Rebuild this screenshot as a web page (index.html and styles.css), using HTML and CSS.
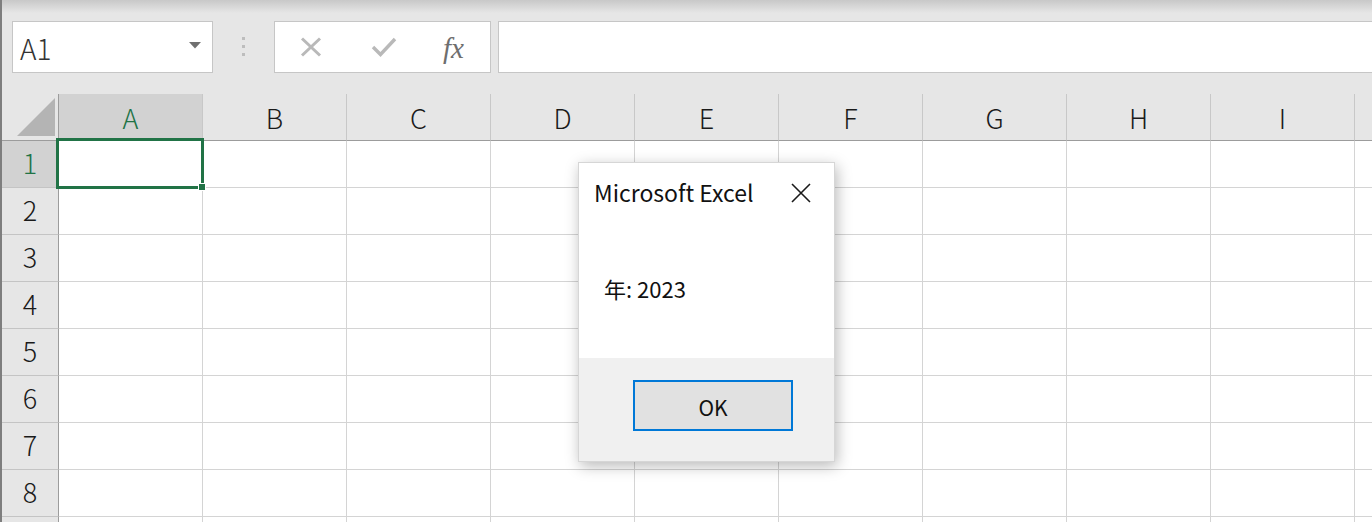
FILE: index.html
```html
<!DOCTYPE html>
<html lang="ja">
<head>
    <meta charset="UTF-8">
    <meta name="viewport" content="width=device-width, initial-scale=1.0">
    <title>Excel</title>
    <link rel="stylesheet" href="styles.css">
</head>
<body>
<div class="app">
    <!-- name box + formula bar -->
    <div class="toolbar">
        <div class="namebox">
            <span>A1</span>
            <svg class="caret" width="12" height="7" viewBox="0 0 12 7"><path d="M0 0H12L6 6.5Z" fill="#707070"/></svg>
        </div>
        <div class="grip"><i></i><i></i><i></i></div>
        <div class="fxbtns">
            <svg width="22" height="20" viewBox="0 0 22 20"><path d="M2 1.5L20 18.5M20 1.5L2 18.5" stroke="#b9b9b9" stroke-width="3" fill="none"/></svg>
            <svg width="26" height="20" viewBox="0 0 26 20"><path d="M2 10L9.5 17.5L24 2" stroke="#b9b9b9" stroke-width="3.4" fill="none"/></svg>
            <span class="fx">fx</span>
        </div>
        <div class="formula"></div>
    </div>

    <!-- sheet grid -->
    <div class="sheet">
        <div class="corner"><svg width="40" height="40" viewBox="0 0 40 40"><path d="M39 1V39H1Z" fill="#b4b4b4"/></svg></div>
        <div class="colhead sel">A</div>
        <div class="colhead">B</div>
        <div class="colhead">C</div>
        <div class="colhead">D</div>
        <div class="colhead">E</div>
        <div class="colhead">F</div>
        <div class="colhead">G</div>
        <div class="colhead">H</div>
        <div class="colhead">I</div>
        <div class="colhead"></div>

        <div class="rowhead sel">1</div>
        <div class="cell active"></div><div class="cell"></div><div class="cell"></div><div class="cell"></div><div class="cell"></div><div class="cell"></div><div class="cell"></div><div class="cell"></div><div class="cell"></div><div class="cell"></div>
        <div class="rowhead">2</div>
        <div class="cell"></div><div class="cell"></div><div class="cell"></div><div class="cell"></div><div class="cell"></div><div class="cell"></div><div class="cell"></div><div class="cell"></div><div class="cell"></div><div class="cell"></div>
        <div class="rowhead">3</div>
        <div class="cell"></div><div class="cell"></div><div class="cell"></div><div class="cell"></div><div class="cell"></div><div class="cell"></div><div class="cell"></div><div class="cell"></div><div class="cell"></div><div class="cell"></div>
        <div class="rowhead">4</div>
        <div class="cell"></div><div class="cell"></div><div class="cell"></div><div class="cell"></div><div class="cell"></div><div class="cell"></div><div class="cell"></div><div class="cell"></div><div class="cell"></div><div class="cell"></div>
        <div class="rowhead">5</div>
        <div class="cell"></div><div class="cell"></div><div class="cell"></div><div class="cell"></div><div class="cell"></div><div class="cell"></div><div class="cell"></div><div class="cell"></div><div class="cell"></div><div class="cell"></div>
        <div class="rowhead">6</div>
        <div class="cell"></div><div class="cell"></div><div class="cell"></div><div class="cell"></div><div class="cell"></div><div class="cell"></div><div class="cell"></div><div class="cell"></div><div class="cell"></div><div class="cell"></div>
        <div class="rowhead">7</div>
        <div class="cell"></div><div class="cell"></div><div class="cell"></div><div class="cell"></div><div class="cell"></div><div class="cell"></div><div class="cell"></div><div class="cell"></div><div class="cell"></div><div class="cell"></div>
        <div class="rowhead">8</div>
        <div class="cell"></div><div class="cell"></div><div class="cell"></div><div class="cell"></div><div class="cell"></div><div class="cell"></div><div class="cell"></div><div class="cell"></div><div class="cell"></div><div class="cell"></div>
        <div class="rowhead"></div>
        <div class="cell"></div><div class="cell"></div><div class="cell"></div><div class="cell"></div><div class="cell"></div><div class="cell"></div><div class="cell"></div><div class="cell"></div><div class="cell"></div><div class="cell"></div>
    </div>

    <!-- message box -->
    <div class="dialog">
        <div class="dlg-body">
            <div class="dlg-title">
                <span>Microsoft Excel</span>
                <svg class="close" width="20" height="20" viewBox="0 0 20 20"><path d="M1 1L19 19M19 1L1 19" stroke="#1a1a1a" stroke-width="1.6" fill="none"/></svg>
            </div>
            <div class="dlg-msg">年: 2023</div>
        </div>
        <div class="dlg-foot">
            <button class="okbtn">OK</button>
        </div>
    </div>
</div>
</body>
</html>
```

FILE: styles.css
```css
body{
    margin: 0;
    background-color: #e6e6e6;
    font-family: "Noto Sans CJK JP", "Noto Sans", sans-serif;
    overflow: hidden;
}
.app{
    position: relative;
    height: 522px;
    border-left: 2px solid #7e7e7e;
    overflow: hidden;
}

/* top bar */
.toolbar{
    display: flex;
    height: 94px;
    box-sizing: border-box;
    padding: 21px 0 0 10px;
    background: linear-gradient(#c8c8c8 0, #e6e6e6 13px);
}
.namebox{
    display: flex;
    align-items: center;
    justify-content: space-between;
    box-sizing: border-box;
    width: 201px;
    height: 52px;
    padding: 0 11px 0 7px;
    background-color: #fff;
    border: 1px solid #c6c6c6;
    font-size: 28px;
    font-weight: 300;
    color: #333;
}
.namebox span{
    margin-top: 2px;
}
.caret{
    margin-top: -4px;
}
.grip{
    display: flex;
    flex-direction: column;
    align-items: center;
    gap: 5px;
    width: 61px;
    padding-top: 16px;
}
.grip i{
    width: 3px;
    height: 3px;
    background-color: #bdbdbd;
}
.fxbtns{
    display: flex;
    align-items: center;
    box-sizing: border-box;
    width: 217px;
    height: 52px;
    padding: 0 0 0 25px;
    background-color: #fff;
    border: 1px solid #c6c6c6;
}
.fxbtns svg:nth-child(2){
    margin-left: 49px;
}
.fx{
    margin-left: 46px;
    margin-top: 3px;
    font-family: "Liberation Serif", serif;
    font-style: italic;
    font-size: 29px;
    color: #6e6e6e;
}
.formula{
    flex: 1;
    height: 52px;
    box-sizing: border-box;
    margin-left: 7px;
    background-color: #fff;
    border: 1px solid #c6c6c6;
    border-right: none;
}

/* grid */
.sheet{
    display: grid;
    grid-template-columns: 57px repeat(10, 144px);
    grid-auto-rows: 47px;
}
.corner{
    display: flex;
    align-items: flex-end;
    justify-content: flex-end;
    padding: 0 2px 3px 0;
    border-right: 1px solid #9c9c9c;
    border-bottom: 1px solid #9c9c9c;
}
.colhead, .rowhead{
    display: flex;
    align-items: center;
    justify-content: center;
    box-sizing: border-box;
    font-size: 27px;
    font-weight: 300;
    color: #1a1a1a;
    background-color: #e6e6e6;
}
.colhead{
    border-right: 1px solid #c8c8c8;
    border-bottom: 1px solid #9c9c9c;
}
.rowhead{
    border-right: 1px solid #9c9c9c;
    border-bottom: 1px solid #c4c4c4;
    padding-bottom: 4px;
}
.colhead.sel, .rowhead.sel{
    background-color: #d2d2d2;
    color: #217346;
}
.cell{
    background-color: #fff;
    border-right: 1px solid #d4d4d4;
    border-bottom: 1px solid #d4d4d4;
}
.cell.active{
    position: relative;
    z-index: 1;
}
.cell.active::after{
    content: "";
    position: absolute;
    top: -3px;
    left: -3px;
    right: -2px;
    bottom: -2px;
    border: 3px solid #217346;
}
.cell.active::before{
    content: "";
    position: absolute;
    right: -4px;
    bottom: -4px;
    width: 6px;
    height: 6px;
    background-color: #217346;
    border: 1px solid #fff;
    z-index: 2;
}

/* message box */
.dialog{
    position: absolute;
    left: 576px;
    top: 162px;
    width: 257px;
    height: 300px;
    display: flex;
    flex-direction: column;
    border: 1px solid #d6d6d6;
    box-sizing: border-box;
    box-shadow: 2px 4px 14px rgba(0, 0, 0, 0.28);
    z-index: 5;
}
.dlg-body{
    flex: 1;
    background-color: #fff;
}
.dlg-title{
    display: flex;
    justify-content: space-between;
    align-items: center;
    padding: 13px 23px 0 15px;
    font-size: 23px;
    color: #111;
}
.dlg-title span{
    margin-top: -1px;
}
.dlg-msg{
    padding: 63px 0 0 25px;
    font-size: 22px;
    color: #111;
}
.dlg-foot{
    height: 103px;
    box-sizing: border-box;
    padding: 22px 0 0 54px;
    background-color: #f0f0f0;
}
.okbtn{
    width: 160px;
    height: 51px;
    background-color: #e1e1e1;
    border: 2px solid #0078d7;
    font-family: "Noto Sans CJK JP", "Noto Sans", sans-serif;
    font-size: 21px;
    color: #111;
    padding: 2px 0 0;
}
```
